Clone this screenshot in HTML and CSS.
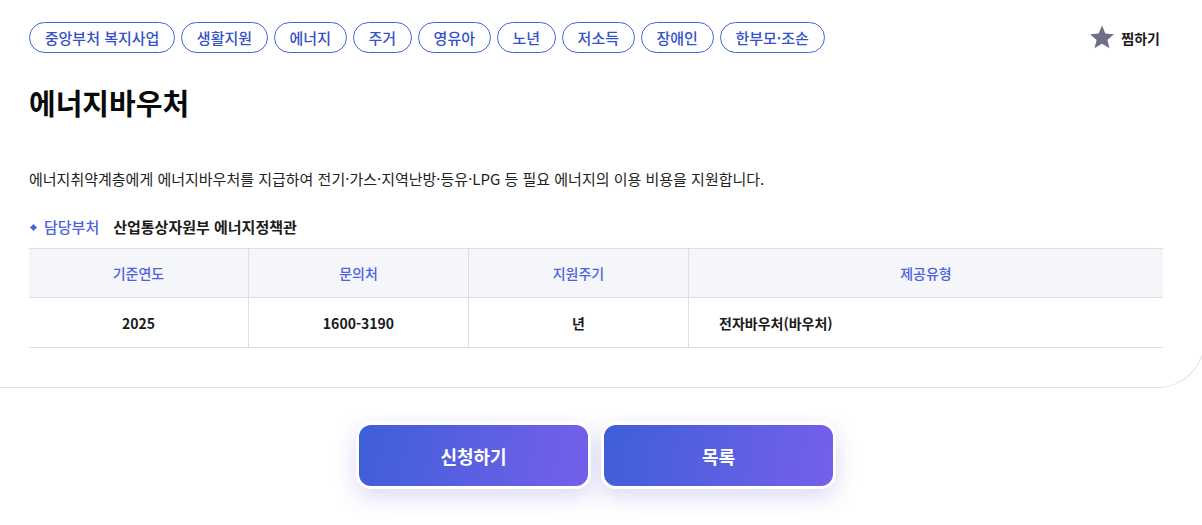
FILE: index.html
```html
<!DOCTYPE html>
<html lang="ko">
<head>
<meta charset="utf-8">
<title>에너지바우처</title>
<link rel="stylesheet" href="styles.css">
</head>
<body>
<div class="card">
  <div class="top">
    <ul class="tags">
      <li class="tag">중앙부처 복지사업</li>
      <li class="tag">생활지원</li>
      <li class="tag">에너지</li>
      <li class="tag">주거</li>
      <li class="tag">영유아</li>
      <li class="tag">노년</li>
      <li class="tag">저소득</li>
      <li class="tag">장애인</li>
      <li class="tag">한부모·조손</li>
    </ul>
    <button class="fav">
      <svg class="star" width="26" height="25" viewBox="0 0 24 23"><path d="M12 0.5l3.1 7.4 7.9.6-6 5.2 1.9 7.8L12 17.3l-6.9 4.2 1.9-7.8-6-5.2 7.9-.6z" fill="#6c6f86"/></svg>
      <span>찜하기</span>
    </button>
  </div>
  <h1 class="title">에너지바우처</h1>
  <p class="desc">에너지취약계층에게 에너지바우처를 지급하여 전기·가스·지역난방·등유·LPG 등 필요 에너지의 이용 비용을 지원합니다.</p>
  <div class="dept">
    <span class="dept-label">담당부처</span>
    <span class="dept-value">산업통상자원부 에너지정책관</span>
  </div>
  <table class="info">
    <thead>
      <tr><th class="c1">기준연도</th><th class="c2">문의처</th><th class="c3">지원주기</th><th class="c4">제공유형</th></tr>
    </thead>
    <tbody>
      <tr><td>2025</td><td>1600-3190</td><td>년</td><td class="left">전자바우처(바우처)</td></tr>
    </tbody>
  </table>
</div>
<div class="actions">
  <button class="btn">신청하기</button>
  <button class="btn">목록</button>
</div>
</body>
</html>
```

FILE: styles.css
```css
html {
  overflow: hidden;
}
html, body {
  margin: 0;
  padding: 0;
  background: #fff;
}
body {
  font-family: "Noto Sans CJK KR", "Noto Sans", sans-serif;
  color: #111;
  min-height: 525px;
}
.card {
  margin-right: -3px;
  border-right: 1px solid #e2e2e6;
  border-bottom: 1px solid #e2e2e6;
  border-bottom-right-radius: 48px;
  padding: 22px 41px 39px 29px;
}
.top {
  display: flex;
  justify-content: space-between;
  align-items: center;
}
.tags {
  list-style: none;
  margin: 0;
  padding: 0;
  display: flex;
  gap: 6px;
}
.tag {
  height: 29px;
  padding: 0 14.75px;
  border: 1px solid #4466dc;
  border-radius: 16px;
  color: #3452c8;
  font-size: 15px;
  font-weight: 500;
  display: flex;
  align-items: center;
  line-height: 1;
}
.fav {
  display: flex;
  align-items: center;
  gap: 5px;
  border: 0;
  background: none;
  padding: 0;
  margin-right: 3px;
  font-family: inherit;
  font-size: 14px;
  font-weight: 700;
  color: #1b1b1b;
}
.star {
  margin-right: 1px;
}
.title {
  margin: 29px 0 0;
  font-size: 29px;
  font-weight: 700;
  line-height: 40px;
  color: #0a0a0a;
}
.desc {
  margin: 46px 0 0;
  font-size: 15px;
  line-height: 22px;
  color: #222;
}
.dept {
  margin-top: 26px;
  display: flex;
  align-items: center;
  font-size: 15px;
  line-height: 22px;
}
.dept-label {
  color: #4b63dd;
  font-weight: 500;
  padding-left: 15px;
  position: relative;
  margin-right: 14px;
}
.dept-label::before {
  content: "";
  position: absolute;
  left: 2px;
  top: 9px;
  width: 5px;
  height: 5px;
  background: #4b63dd;
  transform: rotate(45deg);
}
.dept-value {
  font-weight: 700;
  color: #1b1b1b;
}
.info {
  margin-top: 10px;
  width: 100%;
  border-collapse: collapse;
  table-layout: fixed;
  font-size: 14px;
}
.info th, .info td {
  border: 1px solid #dedfe4;
  height: 48px;
  padding: 0;
  text-align: center;
}
.info td {
  height: 49px;
}
.info tr > :first-child { border-left: 0; }
.info tr > :last-child { border-right: 0; }
.info th {
  background: #f5f6fa;
  color: #4b63dd;
  font-weight: 500;
}
.info td {
  font-weight: 700;
  color: #1b1b1b;
}
.info td.left {
  text-align: left;
  padding-left: 30px;
}
.c1 { width: 219px; }
.c2 { width: 219px; }
.c3 { width: 219px; }
.actions {
  display: flex;
  justify-content: center;
  gap: 10px;
  padding: 34px 39px 0 29px;
}
.btn {
  box-sizing: border-box;
  width: 235px;
  height: 67px;
  border: 3px solid #fff;
  border-radius: 15px;
  background: linear-gradient(100deg, #3e5fd7 0%, #7560ea 100%);
  box-shadow: 0 8px 22px rgba(90, 80, 210, 0.22);
  color: #fff;
  font-family: inherit;
  font-size: 18px;
  font-weight: 700;
}
```
